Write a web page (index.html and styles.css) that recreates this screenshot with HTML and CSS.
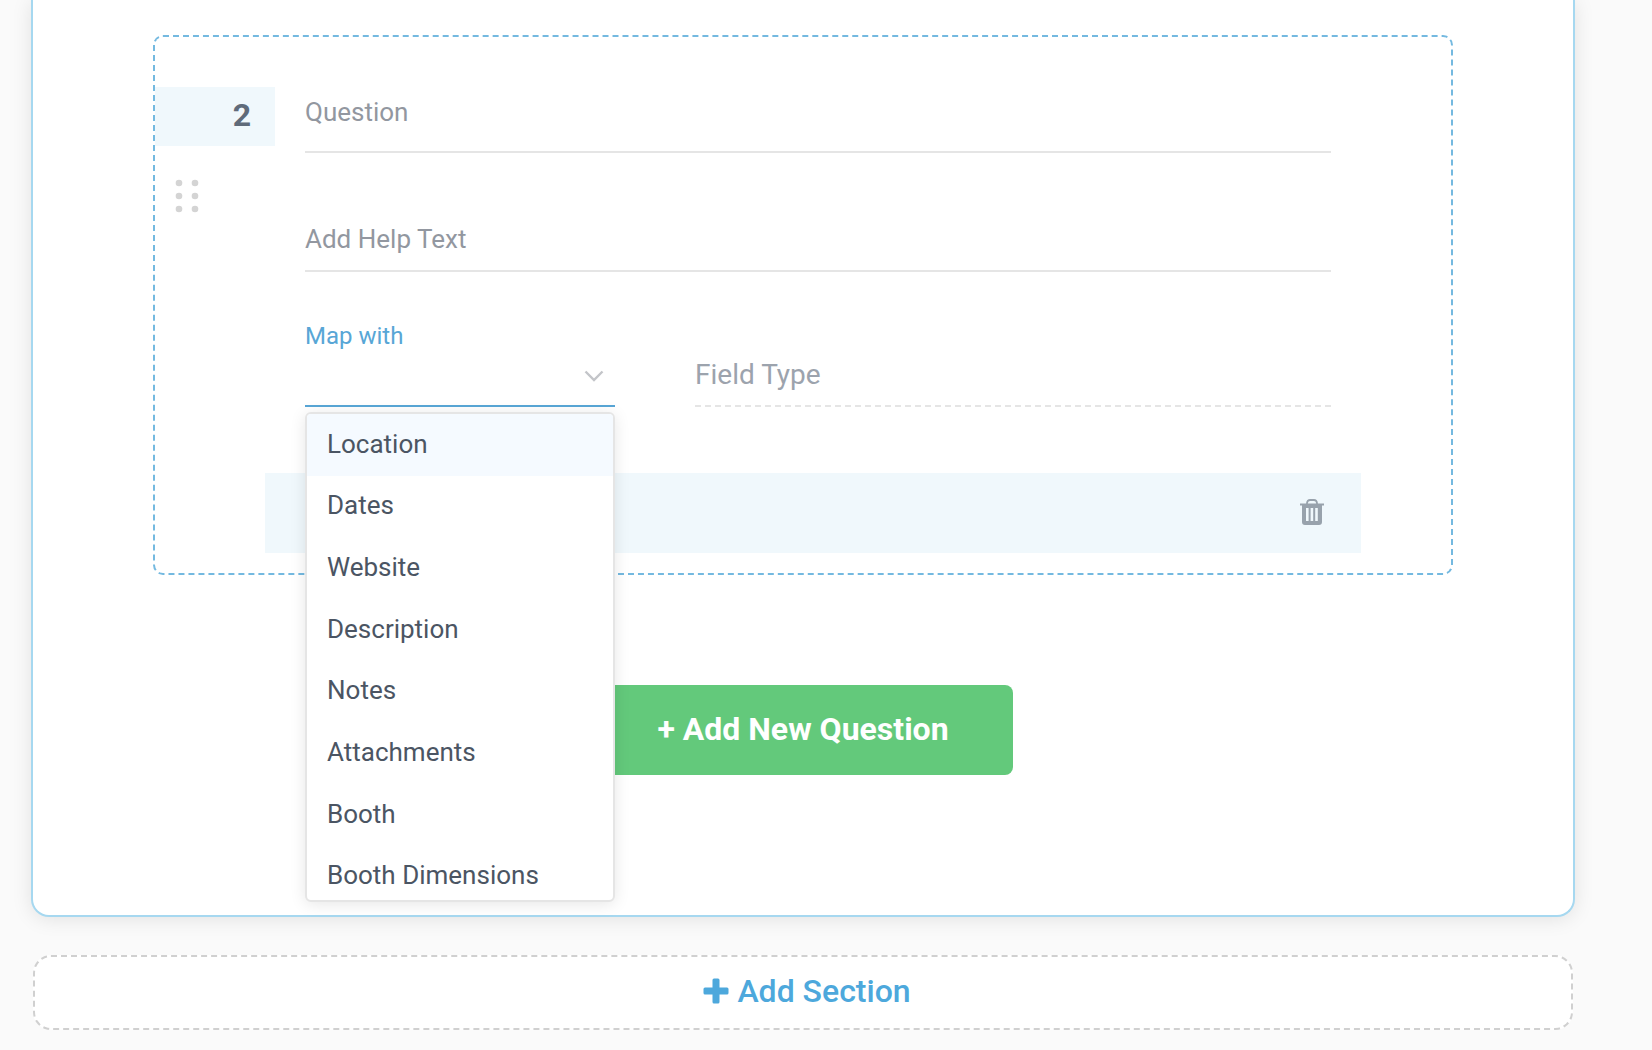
FILE: index.html
```
<!DOCTYPE html>
<html lang="en">
<head>
  <meta charset="UTF-8" />
  <meta name="viewport" content="width=device-width, initial-scale=1.0" />
  <title>Form Builder</title>
  <link rel="stylesheet" href="styles.css">
</head>
<body>
  <main class="page">
    <section class="section-card">
      <div class="question-card">
        <div class="question-side">
          <div class="question-number">2</div>
          <button class="drag-handle" type="button" aria-label="Move question">
            <svg width="24" height="34" viewBox="0 0 24 34" fill="#d4d4d4">
              <circle cx="4" cy="4" r="3.3" /><circle cx="20" cy="4" r="3.3" />
              <circle cx="4" cy="17" r="3.3" /><circle cx="20" cy="17" r="3.3" />
              <circle cx="4" cy="30" r="3.3" /><circle cx="20" cy="30" r="3.3" />
            </svg>
          </button>
        </div>

        <div class="question-body">
          <input class="field question-input" type="text" placeholder="Question" aria-label="Question" />
          <input class="field help-input" type="text" placeholder="Add Help Text" aria-label="Add Help Text" />

          <div class="field-row">
            <div class="map-field">
              <label for="map-with">Map with</label>
              <select id="map-with" class="map-select">
                <option value="" selected></option>
                <option>Location</option>
                <option>Dates</option>
                <option>Website</option>
                <option>Description</option>
                <option>Notes</option>
                <option>Attachments</option>
                <option>Booth</option>
                <option>Booth Dimensions</option>
              </select>
              <svg class="chevron" width="20" height="12" viewBox="0 0 20 12" fill="none" stroke="#c3c5c9" stroke-width="2.4">
                <path d="M1.5 1.5 10 10 18.5 1.5" />
              </svg>
              <div class="dropdown">
                <ul class="dropdown-list" role="listbox" aria-label="Map with">
                  <li class="active" role="option" aria-selected="true">Location</li>
                  <li role="option">Dates</li>
                  <li role="option">Website</li>
                  <li role="option">Description</li>
                  <li role="option">Notes</li>
                  <li role="option">Attachments</li>
                  <li role="option">Booth</li>
                  <li role="option">Booth Dimensions</li>
                </ul>
              </div>
            </div>
            <input class="field type-input" type="text" placeholder="Field Type" aria-label="Field Type" />
          </div>

          <div class="question-footer">
            <button class="delete-btn" type="button" aria-label="Delete question">
              <svg width="24" height="26" viewBox="0 0 24 26">
                <path fill="none" stroke="#98a2ac" stroke-width="1.8" d="M7 5.5V4Q7.400 1 10 1H14Q16.600 1 17 4V5.500" />
                <path fill="#98a2ac" fill-rule="evenodd" d="M0 4.500H24V6.500H22V23Q22 26 19 26H5Q2 26 2 23V6.500H0ZM6 9V22H8.600V9ZM10.600 9V22H13.200V9ZM15.200 9V22H17.800V9Z" />
              </svg>
            </button>
          </div>
        </div>
      </div>

      <button class="add-question" type="button">+ Add New Question</button>
    </section>

    <button class="add-section" type="button">
      <svg width="26" height="26" viewBox="0 0 26 26" fill="#4da8dc">
        <path d="M11 0.500H15Q16.500 0.500 16.500 2V9.500H24Q25.500 9.500 25.500 11V15Q25.500 16.500 24 16.500H16.500V24Q16.500 25.500 15 25.500H11Q9.500 25.500 9.500 24V16.500H2Q0.500 16.500 0.500 15V11Q0.500 9.500 2 9.500H9.500V2Q9.500 0.500 11 0.500Z" />
      </svg>
      Add Section
    </button>
  </main>
</body>
</html>
```
FILE: styles.css
```
* {
  box-sizing: border-box;
  margin: 0;
  padding: 0;
}

body {
  background: #fafafa;
  color: #4b5563;
  font-family: Roboto, sans-serif;
  font-size: 26px;
}

button {
  border: none;
  background: none;
  font-family: inherit;
  cursor: pointer;
}

svg {
  display: block;
}

.page {
  padding: 0 77px 20px 31px;
}

.section-card {
  display: flex;
  flex-direction: column;
  align-items: center;
  padding: 35px 120px 140px;
  background: #fff;
  border: 2px solid #a6d8f0;
  border-top: none;
  border-radius: 0 0 18px 18px;
  box-shadow: 0 2px 20px rgba(0, 0, 0, 0.1);
}

/* question */
.question-card {
  display: flex;
  gap: 30px;
  width: 100%;
  padding: 50px 120px 20px 0;
  border: 2px dashed #74b9e0;
  border-radius: 10px;
}

.question-side {
  flex: 0 0 120px;
}

.question-number {
  height: 59px;
  padding-right: 24px;
  background: #f0f8fc;
  color: #5f6b7a;
  font-size: 32px;
  font-weight: 700;
  line-height: 56px;
  text-align: right;
}

.drag-handle {
  display: block;
  margin: 33px 0 0 20px;
  cursor: move;
}

.question-body {
  flex: 1;
  min-width: 0;
}

.field {
  display: block;
  width: 100%;
  height: 64px;
  border: none;
  border-bottom: 2px solid #e5e5e5;
  background: none;
  color: #4b5563;
  font-family: inherit;
  font-size: 26px;
  outline: none;
}

.field::placeholder {
  color: #9297a0;
  opacity: 1;
}

.question-input {
  height: 66px;
  padding-bottom: 14px;
}

.help-input {
  margin-top: 55px;
}

.field-row {
  display: flex;
  align-items: flex-end;
  gap: 80px;
  margin-top: 49px;
}

.map-field {
  position: relative;
  flex: 0 0 310px;
}

.map-field label {
  display: block;
  color: #58a6d6;
  font-size: 24px;
  line-height: 30px;
}

.map-select {
  display: block;
  width: 100%;
  height: 56px;
  border: none;
  border-bottom: 2px solid #58a6d6;
  border-radius: 0;
  background: none;
  color: #4b5563;
  font-family: inherit;
  font-size: 26px;
  appearance: none;
  outline: none;
}

.chevron {
  position: absolute;
  right: 11px;
  bottom: 25px;
  pointer-events: none;
}

.type-input {
  flex: 1;
  min-width: 0;
  border-bottom-style: dashed;
  font-size: 28px;
}

.type-input::placeholder {
  color: #9ca3ad;
}

/* open menu */
.dropdown {
  position: absolute;
  top: 100%;
  left: 0;
  z-index: 2;
  width: 100%;
  height: 490px;
  margin-top: 5px;
  overflow: hidden;
  background: #fff;
  border: 2px solid #e5e5e5;
  border-radius: 6px;
  box-shadow: 0 2px 16px rgba(0, 0, 0, 0.1);
}

.dropdown-list {
  display: flex;
  flex-direction: column;
  height: 493px;
  list-style: none;
}

.dropdown-list li {
  display: flex;
  flex: 1;
  align-items: center;
  padding: 0 20px 2px;
  cursor: pointer;
}

.dropdown-list .active {
  background: #f5faff;
}

.question-footer {
  display: flex;
  align-items: center;
  justify-content: flex-end;
  height: 80px;
  margin: 66px -30px 0 -40px;
  padding: 0 37px 2px 0;
  background: #f0f8fc;
}

.add-question {
  width: 420px;
  height: 90px;
  margin-top: 110px;
  padding-bottom: 2px;
  border-radius: 8px;
  background: #63c97b;
  color: #fff;
  font-size: 32px;
  font-weight: 700;
}

.add-section {
  display: flex;
  align-items: center;
  justify-content: center;
  gap: 8px;
  width: calc(100% - 4px);
  height: 75px;
  margin: 38px 2px 0;
  padding: 0 0 4px 8px;
  border: 2px dashed #d0d0d0;
  border-radius: 18px;
  background: #fff;
  color: #4da8dc;
  font-size: 32px;
  font-weight: 500;
}
```
